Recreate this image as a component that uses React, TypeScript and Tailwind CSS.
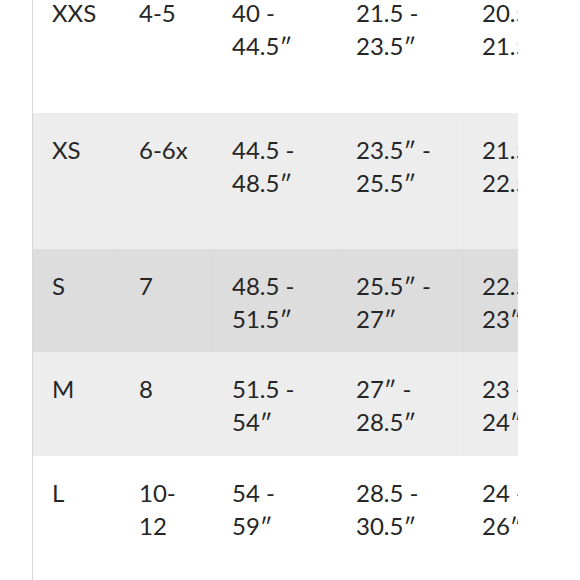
import React from "react";

type Row = {
  size: string;
  age: string[];
  cells: string[][];
  bg: string;
  h: string;
  line: string;
};

const rows: Row[] = [
  {
    size: "XXS",
    age: ["4-5"],
    cells: [["40 -", "44.5″"], ["21.5 -", "23.5″"], ["20.5 -", "21.5″"]],
    bg: "bg-white",
    h: "h-[137px]",
    line: "border-transparent",
  },
  {
    size: "XS",
    age: ["6-6x"],
    cells: [["44.5 -", "48.5″"], ["23.5″ -", "25.5″"], ["21.5 -", "22.5″"]],
    bg: "bg-[#ededed]",
    h: "h-[136px]",
    line: "border-[#e9e9e9]",
  },
  {
    size: "S",
    age: ["7"],
    cells: [["48.5 -", "51.5″"], ["25.5″ -", "27″"], ["22.5 -", "23″"]],
    bg: "bg-[#dddddd]",
    h: "h-[103px]",
    line: "border-[#d9d9d9]",
  },
  {
    size: "M",
    age: ["8"],
    cells: [["51.5 -", "54″"], ["27″ -", "28.5″"], ["23 -", "24″"]],
    bg: "bg-[#ededed]",
    h: "h-[104px]",
    line: "border-[#e9e9e9]",
  },
  {
    size: "L",
    age: ["10-", "12"],
    cells: [["54 -", "59″"], ["28.5 -", "30.5″"], ["24 -", "26″"]],
    bg: "bg-white",
    h: "h-[140px]",
    line: "border-transparent",
  },
];

const widths = ["w-[87px]", "w-[93px]", "w-[124px]", "w-[126px]", "w-[80px]"];

const Cell: React.FC<{ lines: string[]; w: string; line: string }> = ({ lines, w, line }) => (
  <div className={`${w} ${line} shrink-0 border-r pl-[19px] pt-[20px]`}>
    {lines.map((l, i) => (
      <div key={i} className="whitespace-nowrap">
        {l}
      </div>
    ))}
  </div>
);

export default function App() {
  return (
    <div className="w-[580px] h-[580px] overflow-hidden bg-white">
      <div
        className="ml-[32px] w-[486px] h-[604px] -mt-[24px] overflow-hidden border-l border-[#d6d6d6] text-[24px] leading-[33px] text-[#262626]"
        style={{ fontFamily: "Lato, 'Open Sans', sans-serif" }}
      >
        {rows.map((r) => (
          <div key={r.size} className={`flex ${r.h} ${r.bg}`}>
            <Cell lines={[r.size]} w={widths[0]} line={r.line} />
            <Cell lines={r.age} w={widths[1]} line={r.line} />
            {r.cells.map((c, i) => (
              <Cell key={i} lines={c} w={widths[i + 2]} line={r.line} />
            ))}
          </div>
        ))}
      </div>
    </div>
  );
}
